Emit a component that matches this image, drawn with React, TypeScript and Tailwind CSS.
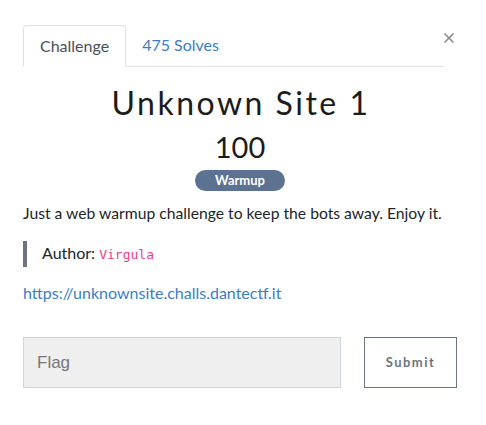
import { X } from "lucide-react";

export default function App() {
  return (
    <div className="relative h-[425px] w-[486px] bg-white font-['Lato',sans-serif] text-[#212529]">
      <button className="absolute left-[441px] top-[30px] text-[#8a8d91]" aria-label="Close">
        <X className="h-[16px] w-[16px]" strokeWidth={2.6} />
      </button>

      <div className="ml-[23px] w-[434px] pt-[25px]">
        {/* Tabs */}
        <div className="flex w-[420px] border-b border-[#dee2e6] text-[16px]">
          <div className="-mb-px rounded-t-[4px] border border-[#dee2e6] border-b-white bg-white px-[16px] py-[8px] text-[#495057]">
            Challenge
          </div>
          <div className="px-[16px] py-[8px] text-[#3c7dc4]">475 Solves</div>
        </div>

        <div className="pt-[14px] text-center">
          <h3 className="pl-[2px] text-[32px] leading-[44px] tracking-[2.5px] text-[#1c1c1c]">Unknown Site 1</h3>
          <h4 className="mt-[4px] text-[29px] leading-[36px] text-[#1c1c1c]">100</h4>
          <span className="mt-[5px] inline-flex h-[21px] items-center rounded-full bg-[#5c7291] px-[20px] text-[13px] font-bold leading-none text-white">
            Warmup
          </span>
        </div>

        <p className="mt-[10px] text-[15.7px] leading-[24px]">
          Just a web warmup challenge to keep the bots away. Enjoy it.
        </p>

        <blockquote className="mt-[16px] border-l-[4px] border-[#6c757d] pl-[15px] text-[16px] leading-[24px]">
          Author: <code className="font-['DejaVu_Sans_Mono',monospace] text-[13px] text-[#e83e8c]">Virgula</code>
        </blockquote>

        <p className="mt-[14px] text-[16px] leading-[24px]">
          <a className="text-[#3c7dc4]">https://unknownsite.challs.dantectf.it</a>
        </p>

        <div className="mt-[32px] flex gap-[23px]">
          <input
            placeholder="Flag"
            className="h-[51px] w-[318px] border border-[#d1d5db] bg-[#efefef] px-[13px] font-['Liberation_Sans',sans-serif] text-[17px] placeholder:text-[#777]"
          />
          <button className="h-[51px] w-[93px] border border-[#6c757d] bg-white text-[13px] font-bold tracking-[1.5px] text-[#6c757d]">
            Submit
          </button>
        </div>
      </div>
    </div>
  );
}
